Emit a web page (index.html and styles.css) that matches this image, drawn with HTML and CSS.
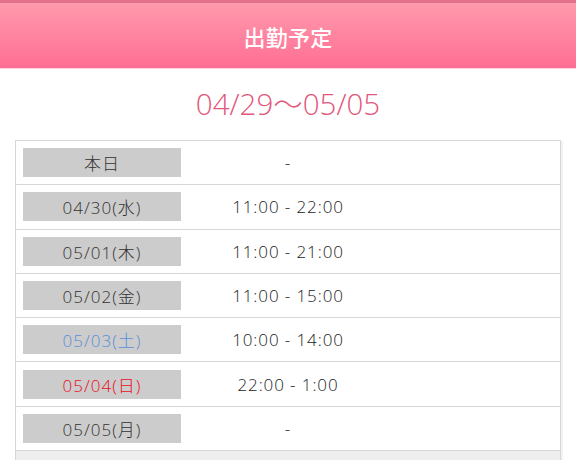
FILE: index.html
```html
<!DOCTYPE html>
<html lang="ja">
<head>
<meta charset="utf-8">
<link rel="stylesheet" href="styles.css">
</head>
<body>
<header class="head"><h1 class="head-title">出勤予定</h1></header>
<p class="range">04/29〜05/05</p>
<div class="sched">
  <div class="row"><span class="day">本日</span><span class="time">-</span></div>
  <div class="row"><span class="day">04/30(水)</span><span class="time">11:00 - 22:00</span></div>
  <div class="row"><span class="day">05/01(木)</span><span class="time">11:00 - 21:00</span></div>
  <div class="row"><span class="day">05/02(金)</span><span class="time">11:00 - 15:00</span></div>
  <div class="row"><span class="day sat">05/03(土)</span><span class="time">10:00 - 14:00</span></div>
  <div class="row"><span class="day sun">05/04(日)</span><span class="time">22:00 - 1:00</span></div>
  <div class="row"><span class="day">05/05(月)</span><span class="time">-</span></div>
  <div class="row foot"></div>
</div>
</body>
</html>
```
FILE: styles.css
```css
html, body {
  margin: 0;
  padding: 0;
  background: #fff;
  font-family: "Open Sans", "Noto Sans CJK JP", sans-serif;
  color: #333;
}
.head {
  border-top: 3px solid #e2718c;
  border-bottom: 1px solid #fcd3dd;
  height: 65px;
  background: linear-gradient(#ff9aac, #ff6e94);
  display: flex;
  align-items: center;
  justify-content: center;
}
.head-title {
  margin: 0;
  color: #fff;
  font-family: "Noto Sans CJK JP", sans-serif;
  font-size: 22px;
  font-weight: 500;
  letter-spacing: 0.3px;
}
.range {
  margin: 0;
  height: 71px;
  padding-bottom: 4px;
  box-sizing: border-box;
  display: flex;
  align-items: center;
  justify-content: center;
  font-size: 29.5px;
  font-weight: 300;
  color: #e2577c;
}
.sched {
  margin: 0 15px;
  width: 544px;
  border: 1px solid #d6d6d6;
  border-bottom: none;
  box-shadow: 3px 0 0 -1px #f2f2f2;
}
.row {
  display: flex;
  align-items: center;
  height: 43.3px;
  border-bottom: 1px solid #d6d6d6;
  padding-left: 7px;
}
.day {
  width: 158px;
  height: 29px;
  background: #cccccc;
  display: flex;
  align-items: center;
  justify-content: center;
  font-size: 17px;
  font-weight: 300;
  letter-spacing: 1px;
  color: #333;
}
.day.sat { color: #5b8ed8; }
.day.sun { color: #e8101c; }
.time {
  width: 214px;
  text-align: center;
  font-size: 17px;
  font-weight: 300;
  letter-spacing: 0.9px;
  color: #222;
}
.row.foot {
  background: #eeeeee;
  border-bottom: none;
}
```
